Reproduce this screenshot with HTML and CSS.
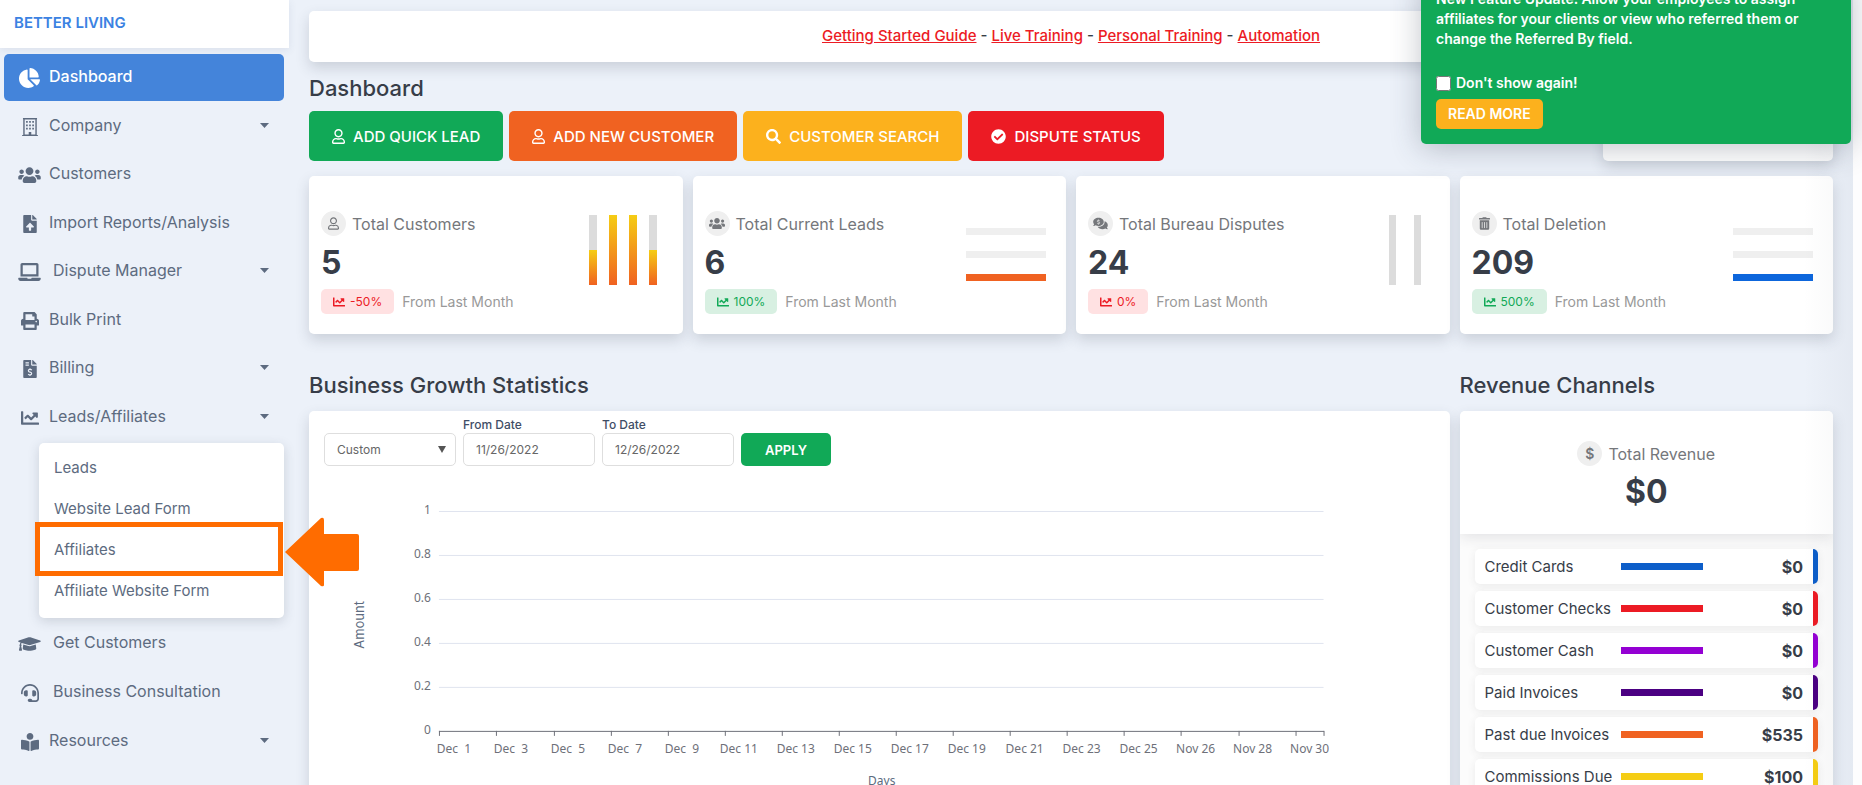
FILE: index.html
```html
<!DOCTYPE html>
<html lang="en">
<head>
<meta charset="utf-8">
<meta name="viewport" content="width=device-width, initial-scale=1">
<title>Dashboard</title>
<link rel="stylesheet" href="styles.css">
</head>
<body>
<svg class="sprite" aria-hidden="true">
  <symbol id="i-pie" viewBox="0 0 544 512"><path d="M527.79 288H290.5l158.03 158.03c6.04 6.04 15.98 6.53 22.19.68 38.7-36.46 65.32-85.61 73.13-140.86 1.34-9.46-6.51-17.85-16.06-17.85zm-15.83-64.8C503.72 103.74 408.26 8.28 288.8.04 279.68-.59 272 7.1 272 16.24V240h223.77c9.14 0 16.82-7.68 16.19-16.8zM224 288V50.71c0-9.55-8.39-17.4-17.84-16.06C86.99 51.49-4.1 155.6.14 280.37 4.5 408.51 114.83 513.59 243.03 511.98c50.4-.63 96.97-16.87 135.26-44.03 7.9-5.6 8.42-17.23 1.57-24.08L224 288z"/></symbol>
  <symbol id="i-building" viewBox="0 0 448 512"><path fill-rule="evenodd" d="M24 0h400v32h-8v448h32v32H0v-32h32V32h-8zM72 40v432h116v-72h72v72h116V40zM112 88h48v48h-48zM200 88h48v48h-48zM288 88h48v48h-48zM112 184h48v48h-48zM200 184h48v48h-48zM288 184h48v48h-48zM112 280h48v48h-48zM200 280h48v48h-48zM288 280h48v48h-48z"/></symbol>
  <symbol id="i-users" viewBox="0 0 640 512"><path d="M96 224c35.3 0 64-28.7 64-64s-28.7-64-64-64-64 28.7-64 64 28.7 64 64 64zm448 0c35.3 0 64-28.7 64-64s-28.7-64-64-64-64 28.7-64 64 28.7 64 64 64zm32 32h-64c-17.6 0-33.5 7.1-45.1 18.6 40.3 22.1 68.9 62 75.1 109.4h66c17.7 0 32-14.3 32-32v-32c0-35.3-28.7-64-64-64zm-256 0c61.9 0 112-50.1 112-112S381.9 32 320 32 208 82.1 208 144s50.1 112 112 112zm76.8 32h-8.3c-20.8 10-43.9 16-68.5 16s-47.6-6-68.5-16h-8.3C179.6 288 128 339.6 128 403.2V432c0 26.5 21.5 48 48 48h288c26.5 0 48-21.5 48-48v-28.8c0-63.6-51.6-115.2-115.2-115.2zm-223.7-13.4C161.5 263.1 145.6 256 128 256H64c-35.3 0-64 28.7-64 64v32c0 17.7 14.3 32 32 32h65.9c6.3-47.4 34.9-87.3 75.2-109.4z"/></symbol>
  <symbol id="i-upload" viewBox="0 0 384 512"><path d="M224 136V0H24C10.7 0 0 10.7 0 24v464c0 13.3 10.7 24 24 24h336c13.3 0 24-10.7 24-24V160H248c-13.2 0-24-10.8-24-24zm65.18 216.01H224v80c0 8.84-7.16 16-16 16h-32c-8.84 0-16-7.16-16-16v-80H94.82c-14.28 0-21.41-17.29-11.27-27.36l96.42-95.7c6.65-6.61 17.39-6.61 24.04 0l96.42 95.7c10.15 10.07 3.03 27.36-11.25 27.36zM377 105L279.1 7c-4.5-4.5-10.6-7-17-7H256v128h128v-6.1c0-6.3-2.5-12.4-7-16.9z"/></symbol>
  <symbol id="i-laptop" viewBox="0 0 640 512"><path d="M624 416H381.54c-.74 19.81-14.71 32-32.74 32H288c-18.69 0-33.02-17.47-32.77-32H16c-8.8 0-16 7.2-16 16v16c0 35.2 28.8 64 64 64h512c35.2 0 64-28.8 64-64v-16c0-8.8-7.2-16-16-16zM576 48c0-26.4-21.6-48-48-48H112C85.6 0 64 21.6 64 48v336h512V48zm-64 272H128V64h384v256z"/></symbol>
  <symbol id="i-print" viewBox="0 0 512 512"><path d="M448 192V77.25c0-8.49-3.37-16.62-9.37-22.63L393.37 9.37c-6-6-14.14-9.37-22.63-9.37H96C78.33 0 64 14.33 64 32v160c-35.35 0-64 28.65-64 64v112c0 8.84 7.16 16 16 16h48v96c0 17.67 14.33 32 32 32h320c17.67 0 32-14.33 32-32v-96h48c8.84 0 16-7.16 16-16V256c0-35.35-28.65-64-64-64zm-64 256H128v-96h256v96zm0-224H128V64h192v48c0 8.84 7.16 16 16 16h48v96zm48 72c-13.25 0-24-10.75-24-24 0-13.26 10.75-24 24-24s24 10.74 24 24c0 13.25-10.75 24-24 24z"/></symbol>
  <symbol id="i-invoice" viewBox="0 0 384 512"><path d="M224 136V0H24C10.7 0 0 10.7 0 24v464c0 13.3 10.7 24 24 24h336c13.3 0 24-10.7 24-24V160H248c-13.2 0-24-10.8-24-24zM377 105L279.1 7c-4.5-4.5-10.6-7-17-7H256v128h128v-6.1c0-6.3-2.5-12.4-7-16.9z"/><path d="M64 80h96M64 144h96M244 286q-18-20-52-20-48 0-48 38 0 30 48 40t48 42q0 38-48 38-34 0-52-20M192 236v30M192 424v34" fill="none" stroke="#ecf1f9" stroke-width="32"/></symbol>
  <symbol id="i-chart" viewBox="0 0 512 512"><path d="M496 384H64V80c0-8.84-7.16-16-16-16H16C7.16 64 0 71.16 0 80v336c0 17.67 14.33 32 32 32h464c8.84 0 16-7.16 16-16v-32c0-8.84-7.16-16-16-16zM464 96H345.94c-21.38 0-32.09 25.85-16.97 40.97l32.4 32.4L288 242.75l-73.37-73.37c-12.5-12.5-32.76-12.5-45.25 0l-68.69 68.69c-6.25 6.25-6.25 16.38 0 22.63l22.62 22.62c6.25 6.25 16.38 6.25 22.63 0L192 237.25l73.37 73.37c12.5 12.5 32.76 12.5 45.25 0l96-96 32.4 32.4c15.12 15.12 40.97 4.41 40.97-16.97V112c.01-8.84-7.15-16-15.99-16z"/></symbol>
  <symbol id="i-cap" viewBox="0 0 640 512"><path d="M622.34 153.2L343.4 67.5c-15.2-4.67-31.6-4.67-46.79 0L17.66 153.2c-23.54 7.23-23.54 38.36 0 45.59l48.63 14.94c-10.67 13.19-17.23 29.28-17.88 46.9C38.78 266.15 32 276.11 32 288c0 10.78 5.68 19.85 13.86 25.65L20.33 428.53C18.11 438.52 25.71 448 35.94 448h56.11c10.24 0 17.84-9.48 15.62-19.47L82.14 313.65C90.32 307.85 96 298.78 96 288c0-11.57-6.47-21.25-15.66-26.87.76-15.02 8.44-28.3 20.69-36.72L296.6 284.5c9.06 2.78 26.44 6.25 46.79 0l278.95-85.7c23.55-7.24 23.55-38.36 0-45.6zM352.79 315.09c-28.53 8.76-52.84 3.92-65.59 0l-145.02-44.55L128 384c0 35.35 85.96 64 192 64s192-28.65 192-64l-14.18-113.47-145.03 44.56z"/></symbol>
  <symbol id="i-headset" viewBox="0 0 512 512"><path d="M192 208c0-17.67-14.33-32-32-32h-16c-35.35 0-64 28.65-64 64v48c0 35.35 28.65 64 64 64h16c17.67 0 32-14.33 32-32V208zm176 144c35.35 0 64-28.65 64-64v-48c0-35.35-28.65-64-64-64h-16c-17.67 0-32 14.33-32 32v112c0 17.67 14.33 32 32 32h16zM256 0C113.18 0 4.58 118.83 0 256v16c0 8.84 7.16 16 16 16h16c8.84 0 16-7.16 16-16v-16c0-114.69 93.31-208 208-208s208 93.31 208 208h-.12c.08 2.43.12 165.72.12 165.72 0 23.35-18.93 42.28-42.28 42.28H320c0-26.51-21.49-48-48-48h-32c-26.51 0-48 21.49-48 48s21.49 48 48 48h181.72c49.86 0 90.28-40.42 90.28-90.28V256C507.42 118.83 398.82 0 256 0z"/></symbol>
  <symbol id="i-reader" viewBox="0 0 512 512"><path d="M352 96c0-53.02-42.98-96-96-96s-96 42.98-96 96 42.98 96 96 96 96-42.98 96-96zM233.59 241.1c-59.33-36.32-155.43-46.3-203.79-49.05C13.55 191.13 0 203.51 0 219.14v222.8c0 14.33 11.59 26.28 26.49 27.05 43.66 2.29 131.99 10.68 193.04 41.43 9.37 4.72 20.48-1.71 20.48-11.87V252.56c-.01-4.67-2.32-8.95-6.42-11.46zm248.61-49.05c-48.35 2.74-144.46 12.73-203.78 49.05-4.1 2.51-6.41 6.96-6.41 11.63v245.79c0 10.19 11.14 16.63 20.54 11.9 61.04-30.72 149.32-39.11 192.97-41.4 14.9-.78 26.49-12.73 26.49-27.06V219.14c-.01-15.63-13.56-28.01-29.81-27.09z"/></symbol>
  <symbol id="i-search" viewBox="0 0 512 512"><path d="M505 442.7L405.3 343c-4.5-4.5-10.6-7-17-7H372c27.6-35.3 44-79.7 44-128C416 93.1 322.9 0 208 0S0 93.1 0 208s93.1 208 208 208c48.3 0 92.7-16.4 128-44v16.3c0 6.4 2.5 12.5 7 17l99.7 99.7c9.4 9.4 24.6 9.4 33.9 0l28.3-28.3c9.4-9.4 9.4-24.6.1-34zM208 336c-70.7 0-128-57.2-128-128 0-70.7 57.2-128 128-128 70.7 0 128 57.2 128 128 0 70.7-57.2 128-128 128z"/></symbol>
  <symbol id="i-check" viewBox="0 0 512 512"><path d="M504 256c0 136.967-111.033 248-248 248S8 392.967 8 256 119.033 8 256 8s248 111.033 248 248zM227.314 387.314l184-184c6.248-6.248 6.248-16.379 0-22.627l-22.627-22.627c-6.248-6.249-16.379-6.249-22.628 0L216 308.118l-70.059-70.059c-6.248-6.248-16.379-6.248-22.628 0l-22.627 22.627c-6.248 6.248-6.248 16.379 0 22.627l104 104c6.249 6.249 16.379 6.249 22.628.001z"/></symbol>
  <symbol id="i-user" viewBox="0 0 448 512"><path d="M313.6 304c-28.7 0-42.5 16-89.6 16-47.1 0-60.8-16-89.6-16C60.2 304 0 364.2 0 438.4V464c0 26.5 21.5 48 48 48h352c26.5 0 48-21.5 48-48v-25.6c0-74.2-60.2-134.4-134.4-134.4zM400 464H48v-25.6c0-47.6 38.8-86.4 86.4-86.4 14.6 0 38.3 16 89.6 16 51.7 0 74.9-16 89.6-16 47.6 0 86.4 38.8 86.4 86.4V464zM224 288c79.5 0 144-64.5 144-144S303.5 0 224 0 80 64.5 80 144s64.5 144 144 144zm0-240c52.9 0 96 43.1 96 96s-43.1 96-96 96-96-43.1-96-96 43.1-96 96-96z"/></symbol>
  <symbol id="i-trash" viewBox="0 0 448 512"><path d="M32 464a48 48 0 0 0 48 48h288a48 48 0 0 0 48-48V128H32zm272-256a16 16 0 0 1 32 0v224a16 16 0 0 1-32 0zm-96 0a16 16 0 0 1 32 0v224a16 16 0 0 1-32 0zm-96 0a16 16 0 0 1 32 0v224a16 16 0 0 1-32 0zM432 32H312l-9.4-18.7A24 24 0 0 0 281.1 0H166.8a23.72 23.72 0 0 0-21.4 13.3L136 32H16A16 16 0 0 0 0 48v32a16 16 0 0 0 16 16h416a16 16 0 0 0 16-16V48a16 16 0 0 0-16-16z"/></symbol>
  <symbol id="i-comments" viewBox="0 0 576 512"><path d="M416 192c0-88.4-93.1-160-208-160S0 103.6 0 192c0 34.3 14.1 65.9 38 92-13.4 30.2-35.5 54.2-35.8 54.5-2.2 2.3-2.8 5.7-1.5 8.7S4.8 352 8 352c36.6 0 66.9-12.3 88.7-25 32.2 15.7 70.3 25 111.3 25 114.9 0 208-71.6 208-160zm122 220c23.9-26 38-57.7 38-92 0-66.9-53.5-124.2-129.3-148.1.9 6.6 1.3 13.3 1.3 20.1 0 105.9-107.7 192-240 192-10.8 0-21.3-.8-31.7-1.9C207.8 439.6 281.8 480 368 480c41 0 79.1-9.2 111.3-25 21.8 12.7 52.1 25 88.7 25 3.2 0 6.1-1.9 7.3-4.8 1.3-2.9.7-6.3-1.5-8.7-.3-.3-22.4-24.2-35.8-54.5z"/><path d="M256 152q-18-18-48-18-46 0-46 32 0 22 46 30t46 34q0 34-46 34-30 0-48-18M208 104v30M208 264v30" fill="none" stroke="#efefef" stroke-width="32"/></symbol>
  <symbol id="i-caret" viewBox="0 0 9 5"><path d="M0 0h9L4.500 5z"/></symbol>
</svg>

<div class="app">
  <aside class="sidebar">
    <div class="brand">BETTER LIVING</div>
    <nav class="nav">
      <a class="item active" href="#"><span class="ico"><svg width="21" height="20"><use href="#i-pie"/></svg></span><span>Dashboard</span></a>
      <a class="item" href="#"><span class="ico"><svg width="16" height="18"><use href="#i-building"/></svg></span><span>Company</span><svg class="caret" width="9" height="5"><use href="#i-caret"/></svg></a>
      <a class="item" href="#"><span class="ico"><svg width="23" height="18"><use href="#i-users"/></svg></span><span>Customers</span></a>
      <a class="item" href="#"><span class="ico"><svg width="14" height="18"><use href="#i-upload"/></svg></span><span>Import Reports/Analysis</span></a>
      <a class="item wide" href="#"><span class="ico"><svg width="23" height="18"><use href="#i-laptop"/></svg></span><span>Dispute Manager</span><svg class="caret" width="9" height="5"><use href="#i-caret"/></svg></a>
      <a class="item" href="#"><span class="ico"><svg width="18" height="18"><use href="#i-print"/></svg></span><span>Bulk Print</span></a>
      <a class="item" href="#"><span class="ico"><svg width="14" height="18"><use href="#i-invoice"/></svg></span><span>Billing</span><svg class="caret" width="9" height="5"><use href="#i-caret"/></svg></a>
      <a class="item" href="#"><span class="ico"><svg width="18" height="18"><use href="#i-chart"/></svg></span><span>Leads/Affiliates</span><svg class="caret" width="9" height="5"><use href="#i-caret"/></svg></a>
      <div class="submenu">
        <a href="#">Leads</a>
        <a href="#">Website Lead Form</a>
        <div class="marked">
          <a href="#">Affiliates</a>
          <span class="marker"></span>
          <svg class="arrow" width="74" height="70" viewBox="0 0 74 70"><path d="M0 35 36 1q3-1 3 2v14h33q2 0 2 2v33q0 2-2 2H39v14q0 2-3 1z"/></svg>
        </div>
        <a href="#">Affiliate Website Form</a>
      </div>
      <a class="item wide" href="#"><span class="ico"><svg width="23" height="18"><use href="#i-cap"/></svg></span><span>Get Customers</span></a>
      <a class="item wide" href="#"><span class="ico"><svg width="18" height="18"><use href="#i-headset"/></svg></span><span>Business Consultation</span></a>
      <a class="item" href="#"><span class="ico"><svg width="18" height="18"><use href="#i-reader"/></svg></span><span>Resources</span><svg class="caret" width="9" height="5"><use href="#i-caret"/></svg></a>
    </nav>
  </aside>

  <main class="main">
    <p class="card notice"><a href="#">Getting Started Guide</a> - <a href="#">Live Training</a> - <a href="#">Personal Training</a> - <a href="#">Automation</a></p>
    <h1>Dashboard</h1>
    <div class="actions">
      <button class="btn green" type="button"><svg width="13" height="15"><use href="#i-user"/></svg>ADD QUICK LEAD</button>
      <button class="btn orange" type="button"><svg width="13" height="15"><use href="#i-user"/></svg>ADD NEW CUSTOMER</button>
      <button class="btn amber" type="button"><svg width="15" height="15"><use href="#i-search"/></svg>CUSTOMER SEARCH</button>
      <button class="btn red" type="button"><svg width="15" height="15"><use href="#i-check"/></svg>DISPUTE STATUS</button>
      <div class="card blank"></div>
    </div>

    <div class="grid">
      <section class="card stat">
        <div>
          <h3><span class="dot"><svg width="11" height="13"><use href="#i-user"/></svg></span>Total Customers</h3>
          <strong class="num">5</strong>
          <p class="trend"><span class="badge down"><svg width="12" height="12"><use href="#i-chart"/></svg>-50%</span>From Last Month</p>
        </div>
        <div class="cols warm"><i class="half"></i><i class="full"></i><i class="full"></i><i class="half"></i></div>
      </section>
      <section class="card stat">
        <div>
          <h3><span class="dot"><svg width="16" height="13"><use href="#i-users"/></svg></span>Total Current Leads</h3>
          <strong class="num">6</strong>
          <p class="trend"><span class="badge up"><svg width="12" height="12"><use href="#i-chart"/></svg>100%</span>From Last Month</p>
        </div>
        <div class="rows"><i></i><i></i><i class="on-orange"></i></div>
      </section>
      <section class="card stat">
        <div>
          <h3><span class="dot"><svg width="15" height="13"><use href="#i-comments"/></svg></span>Total Bureau Disputes</h3>
          <strong class="num">24</strong>
          <p class="trend"><span class="badge down"><svg width="12" height="12"><use href="#i-chart"/></svg>0%</span>From Last Month</p>
        </div>
        <div class="cols pair"><i></i><i></i></div>
      </section>
      <section class="card stat">
        <div>
          <h3><span class="dot"><svg width="11" height="13"><use href="#i-trash"/></svg></span>Total Deletion</h3>
          <strong class="num">209</strong>
          <p class="trend"><span class="badge up"><svg width="12" height="12"><use href="#i-chart"/></svg>500%</span>From Last Month</p>
        </div>
        <div class="rows"><i></i><i></i><i class="on-blue"></i></div>
      </section>
    </div>

    <div class="grid lower">
      <section class="growth">
        <h2>Business Growth Statistics</h2>
        <div class="card panel">
          <form class="filters">
            <div class="select"><select aria-label="Range"><option>Custom</option></select><svg width="8" height="7" viewBox="0 0 8 7"><path d="M0 0h8L4 7z"/></svg></div>
            <div class="field"><label for="from">From Date</label><input id="from" type="text" value="11/26/2022"></div>
            <div class="field"><label for="to">To Date</label><input id="to" type="text" value="12/26/2022"></div>
            <button class="apply" type="button">APPLY</button>
          </form>
          <svg class="chart" viewBox="0 0 1141 340">
            <path class="gl" d="M130 45.500H1015M130 89.500H1015M130 133.500H1015M130 177.500H1015M130 221.500H1015"/>
            <path class="ax" d="M130 265.500H1015.500M130.500 265v5M187.500 265v5M245.500 265v5M302.500 265v5M359.500 265v5M416.500 265v5M473.500 265v5M530.500 265v5M587.500 265v5M644.500 265v5M701.500 265v5M758.500 265v5M815.500 265v5M872.500 265v5M930.500 265v5M987.500 265v5M1015.500 265v5"/>
            <g class="yl"><text x="122" y="48">1</text><text x="122" y="92">0.8</text><text x="122" y="136">0.6</text><text x="122" y="180">0.4</text><text x="122" y="224">0.2</text><text x="122" y="268">0</text></g>
            <g class="xl"><text x="145" y="287">Dec  1</text><text x="202" y="287">Dec  3</text><text x="259" y="287">Dec  5</text><text x="316" y="287">Dec  7</text><text x="373" y="287">Dec  9</text><text x="430" y="287">Dec 11</text><text x="487" y="287">Dec 13</text><text x="544" y="287">Dec 15</text><text x="601" y="287">Dec 17</text><text x="658" y="287">Dec 19</text><text x="716" y="287">Dec 21</text><text x="773" y="287">Dec 23</text><text x="830" y="287">Dec 25</text><text x="887" y="287">Nov 26</text><text x="944" y="287">Nov 28</text><text x="1001" y="287">Nov 30</text></g>
            <text class="days" x="573" y="319">Days</text>
            <text class="amount" transform="translate(55 159) rotate(-90)">Amount</text>
          </svg>
        </div>
      </section>
      <section>
        <h2>Revenue Channels</h2>
        <div class="card revenue">
          <div class="total">
            <h3><span class="dot">$</span>Total Revenue</h3>
            <strong class="num">$0</strong>
          </div>
          <ul>
            <li class="c-blue"><span>Credit Cards</span><i></i><b>$0</b></li>
            <li class="c-red"><span>Customer Checks</span><i></i><b>$0</b></li>
            <li class="c-purple"><span>Customer Cash</span><i></i><b>$0</b></li>
            <li class="c-indigo"><span>Paid Invoices</span><i></i><b>$0</b></li>
            <li class="c-orange"><span>Past due Invoices</span><i></i><b>$535</b></li>
            <li class="c-yellow"><span>Commissions Due</span><i></i><b>$100</b></li>
          </ul>
        </div>
      </section>
    </div>
  </main>
  <div class="edge"></div>
</div>

<div class="toast">
  <p>New Feature Update. Allow your employees to assign affiliates for your clients or view who referred them or change the Referred By field.</p>
  <label><input type="checkbox">Don't show again!</label>
  <button type="button">READ MORE</button>
</div>
</body>
</html>
```
FILE: styles.css
```css
* { box-sizing: border-box; }
html, body { height: 100%; margin: 0; }
body {
  position: relative;
  overflow: hidden;
  background: #fdfdfe;
  font-family: Inter, "Liberation Sans", sans-serif;
  font-weight: 500;
  color: #373d48;
}
h1, h2, h3, p, ul { margin: 0; padding: 0; }
ul { list-style: none; }
a { color: inherit; text-decoration: none; }
button, input, select { font: inherit; }
svg { fill: currentColor; flex: none; }
.sprite { position: absolute; width: 0; height: 0; }

.app {
  position: relative;
  display: flex;
  gap: 20px;
  height: 100vh;
  margin-right: 9px;
  padding-right: 20px;
  background: #ecf1f9;
  overflow: hidden;
}
.edge {
  position: absolute;
  top: 0;
  right: 0;
  bottom: 0;
  width: 50px;
  background: linear-gradient(to right, rgba(40, 50, 70, 0), rgba(40, 50, 70, .04));
  pointer-events: none;
}

.sidebar { flex: none; width: 289px; }
.brand {
  height: 48px;
  padding: 0 14px;
  line-height: 46px;
  background: #fff;
  box-shadow: 0 2px 8px rgba(60, 80, 120, .1);
  color: #3b82e2;
  font-size: 15px;
  font-weight: 600;
}
.nav { padding: 6px 5px 0 4px; }
.item {
  display: flex;
  align-items: center;
  height: 47px;
  margin-bottom: 2px;
  padding: 0 15px 3px 14px;
  border-radius: 5px;
  color: #5d6b80;
  font-size: 16px;
  font-weight: 400;
}
.item:nth-child(even) { margin-bottom: 1px; }
.submenu + .item { margin-bottom: 2px; }
.item.active { background: #4484da; color: #fff; font-weight: 500; }
.ico {
  display: flex;
  justify-content: center;
  flex: none;
  width: 23px;
  margin-right: 8px;
  padding-top: 4px;
}
.wide .ico { margin-right: 12px; }
.caret { margin-left: auto; }
.submenu {
  position: relative;
  z-index: 2;
  margin: 2px 0 2px 35px;
  padding: 4px 15px 7px;
  border-radius: 5px;
  background: #fff;
  box-shadow: 0 3px 12px rgba(50, 60, 80, .18);
  color: #5d6b80;
  font-size: 15px;
  font-weight: 400;
}
.submenu a { display: block; height: 41px; line-height: 41px; }
.marked { position: relative; }
.marker {
  position: absolute;
  top: -7px;
  left: -19px;
  right: -14px;
  height: 54px;
  border: 5px solid #ff6c00;
}
.arrow {
  position: absolute;
  top: -12px;
  left: calc(100% + 16px);
  color: #ff6c00;
}

.main { flex: 1; min-width: 0; padding-top: 11px; }
.card {
  border-radius: 5px;
  background: #fff;
  box-shadow: 0 6px 14px rgba(50, 60, 80, .18);
}
.notice { height: 51px; line-height: 50px; text-align: center; font-size: 15px; }
.notice a { color: #ec1b24; text-decoration: underline; }
h1, h2 { font-size: 22px; line-height: 24px; font-weight: 500; }
h1 { margin: 14px 0 11px; }
h2 { margin: 39px 0 14px; }

.actions { display: flex; gap: 6px; margin-bottom: 15px; }
.btn {
  display: flex;
  align-items: center;
  gap: 8px;
  height: 50px;
  padding: 0 23px;
  border: 0;
  border-radius: 5px;
  color: #fff;
  font-size: 15px;
}
.green { background: #11a957; }
.orange { background: #f06221; }
.amber { background: #fcb11d; }
.red { background: #ec1b24; }
.blank { width: 230px; height: 50px; margin-left: auto; }

.grid { display: grid; grid-template-columns: repeat(4, minmax(0, 1fr)); gap: 10px; }
.growth { grid-column: span 3; }
.stat {
  display: flex;
  justify-content: space-between;
  height: 158px;
  padding: 35px 20px 0 12px;
}
h3 {
  display: flex;
  align-items: center;
  gap: 6px;
  color: #75777b;
  font-size: 16px;
  line-height: 24px;
  font-weight: 400;
}
.dot {
  display: flex;
  align-items: center;
  justify-content: center;
  width: 25px;
  height: 25px;
  border-radius: 50%;
  background: #efefef;
  color: #75777b;
  font-size: 14px;
  font-weight: 600;
}
.num { display: block; margin-top: 9px; font-size: 32px; line-height: 36px; font-weight: 700; }
.trend { display: flex; align-items: center; gap: 8px; margin-top: 8px; color: #999; font-size: 14px; font-weight: 400; }
.badge {
  display: flex;
  align-items: center;
  gap: 5px;
  height: 25px;
  padding: 0 12px;
  border-radius: 5px;
  font-size: 12px;
}
.down { background: #ffe1e2; color: #ec1b24; }
.up { background: #d8f0e2; color: #11a957; }
.cols { display: flex; gap: 12px; height: 70px; margin: 4px 6px 0 0; }
.cols i { width: 8px; background: #dcdcdc; }
.cols .full { background: linear-gradient(#f5cd14, #f06221); }
.cols .half { background: linear-gradient(#f5cd14, #f06221) bottom / 100% 50% no-repeat #dcdcdc; }
.cols.pair { gap: 18px; margin-right: 9px; }
.cols.pair i { width: 7px; }
.rows { display: flex; flex-direction: column; gap: 16px; padding-top: 17px; }
.rows i { width: 80px; height: 7px; background: #efefef; }
.rows .on-orange { background: #f06221; }
.rows .on-blue { background: #0d66dc; }

.panel { min-height: 420px; }
.filters {
  display: flex;
  align-items: flex-end;
  gap: 7px;
  padding: 6px 15px 0;
  font-size: 12px;
}
.select { position: relative; }
.select svg { position: absolute; right: 10px; top: 13px; color: #555; }
.field { display: flex; flex-direction: column; }
.field label { line-height: 16px; color: #3f4d66; }
.filters input, .filters select {
  appearance: none;
  display: block;
  width: 132px;
  height: 33px;
  padding: 0 12px;
  border: 1px solid #dedede;
  border-radius: 5px;
  background: #fff;
  color: #666;
  font-weight: 400;
}
.apply {
  width: 90px;
  height: 33px;
  border: 0;
  border-radius: 5px;
  background: #11a957;
  color: #fff;
  font-size: 13px;
  font-weight: 600;
}
.chart { display: block; width: 100%; }
.chart text { fill: #6e7079; font: 400 12px "Noto Sans", sans-serif; text-anchor: middle; white-space: pre; }
.chart .yl text { text-anchor: end; }
.chart .amount { fill: #5d6b80; font-family: Inter, sans-serif; font-size: 13px; }
.chart .days { fill: #5d6b80; }
.gl { stroke: #e0e4ef; }
.ax { stroke: #6e7079; }

.revenue { overflow: hidden; min-height: 420px; background: #fcfcfc; }
.total {
  display: flex;
  flex-direction: column;
  align-items: center;
  height: 123px;
  padding-top: 30px;
  background: #fff;
  box-shadow: 0 3px 14px rgba(50, 50, 60, .13);
}
.total .num { margin-top: 8px; }
.revenue ul { display: grid; gap: 7px; padding: 15px; }
.revenue li {
  display: grid;
  grid-template-columns: 136px 82px 1fr;
  align-items: center;
  height: 35px;
  padding: 0 10px;
  border-right: 5px solid var(--c);
  border-radius: 5px;
  background: #fff;
  box-shadow: 0 2px 8px rgba(50, 50, 60, .09);
  font-size: 15px;
  font-weight: 400;
}
.revenue i { height: 7px; background: var(--c); }
.revenue b { text-align: right; font-size: 16px; font-weight: 700; }
.c-blue { --c: #0d5ec9; }
.c-red { --c: #ec1b24; }
.c-purple { --c: #9400d3; }
.c-indigo { --c: #4b0082; }
.c-orange { --c: #f06221; }
.c-yellow { --c: #f5cd14; }

.toast {
  position: absolute;
  z-index: 5;
  top: -26px;
  right: 11px;
  width: 430px;
  padding: 15px;
  border-radius: 5px;
  background: #11a957;
  box-shadow: 0 4px 30px rgba(50, 60, 80, .3);
  color: #fff;
  font-size: 14px;
  line-height: 20px;
  font-weight: 600;
}
.toast label { display: flex; align-items: center; gap: 5px; height: 20px; margin: 24px 0 6px; }
.toast input { width: 15px; height: 15px; margin: 0; }
.toast button {
  display: block;
  height: 30px;
  padding: 0 12px;
  border: 0;
  border-radius: 5px;
  background: #fcb11d;
  color: #fff;
  font-size: 14px;
}
```
